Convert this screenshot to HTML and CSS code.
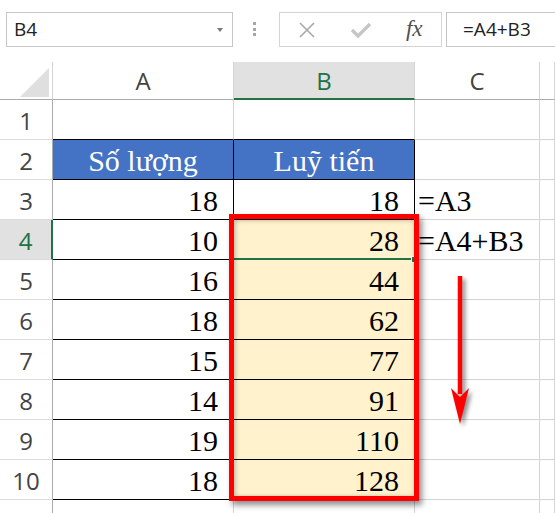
FILE: index.html
```html
<!DOCTYPE html>
<html>
<head>
<meta charset="utf-8">
<title>Luỹ tiến</title>
<link rel="stylesheet" href="styles.css">
</head>
<body>

<!-- FORMULA BAR -->
<div class="toolbar">
  <div class="namebox"><span>B4</span><i class="caret"></i></div>
  <div class="grip"><i></i><i></i><i></i></div>
  <div class="fxbtns">
    <span>
      <svg width="18" height="16" viewBox="0 0 18 16"><path d="M2 1 L16 15 M16 1 L2 15" stroke="#a8a8a8" stroke-width="1.6" fill="none"/></svg>
    </span>
    <span>
      <svg width="22" height="16" viewBox="0 0 22 16"><path d="M2 8 L8 14 L20 2" stroke="#c6c6c6" stroke-width="3.4" fill="none"/></svg>
    </span>
    <span class="fx">fx</span>
  </div>
  <div class="formula">=A4+B3</div>
</div>

<!-- SHEET -->
<div class="sheet">
  <div class="c ch corner"></div>
  <div class="c ch">A</div>
  <div class="c ch on">B</div>
  <div class="c ch">C</div>
  <div class="c ch"></div>

  <div class="c rh">1</div>
  <div class="c top"></div>
  <div class="c top"></div>
  <div class="c"></div>
  <div class="c"></div>

  <div class="c rh">2</div>
  <div class="c t hd">Số lượng</div>
  <div class="c t hd">Luỹ tiến</div>
  <div class="c"></div>
  <div class="c"></div>

  <div class="c rh">3</div>
  <div class="c t num">18</div>
  <div class="c t num">18</div>
  <div class="c f">=A3</div>
  <div class="c"></div>

  <div class="c rh on">4</div>
  <div class="c t num">10</div>
  <div class="c t num y sel">28</div>
  <div class="c f">=A4+B3</div>
  <div class="c"></div>

  <div class="c rh">5</div>
  <div class="c t num">16</div>
  <div class="c t num y">44</div>
  <div class="c"></div>
  <div class="c"></div>

  <div class="c rh">6</div>
  <div class="c t num">18</div>
  <div class="c t num y">62</div>
  <div class="c"></div>
  <div class="c"></div>

  <div class="c rh">7</div>
  <div class="c t num">15</div>
  <div class="c t num y">77</div>
  <div class="c"></div>
  <div class="c"></div>

  <div class="c rh">8</div>
  <div class="c t num">14</div>
  <div class="c t num y">91</div>
  <div class="c"></div>
  <div class="c"></div>

  <div class="c rh">9</div>
  <div class="c t num">19</div>
  <div class="c t num y">110</div>
  <div class="c"></div>
  <div class="c"></div>

  <div class="c rh">10</div>
  <div class="c t num">18</div>
  <div class="c t num y">128</div>
  <div class="c"></div>
  <div class="c"></div>

  <div class="c rh last"></div>
  <div class="c last"></div>
  <div class="c last"></div>
  <div class="c last"></div>
  <div class="c last"></div>

  <!-- annotations -->
  <div class="mark"></div>
  <svg class="arrow" width="40" height="165" viewBox="0 0 40 165">
    <path d="M20 6 L20 124" stroke="#ff0000" stroke-width="4.5" fill="none"/>
    <polygon points="20,154 11,118 20,127 29,118" fill="#ff0000"/>
  </svg>
</div>

</body>
</html>
```

FILE: styles.css
```css
body{
  margin:0;
  background:#fff;
  overflow:hidden;
  font-family:"Open Sans",sans-serif;
}

/* FORMULA BAR */
.toolbar{
  display:flex;
  align-items:flex-start;
  height:62px;
  padding:12px 0 0 6px;
  box-sizing:border-box;
}
.namebox{
  width:227px;
  height:35px;
  box-sizing:border-box;
  border:1px solid #c6c6c6;
  display:flex;
  align-items:center;
  padding-left:7px;
  font-size:19px;
  line-height:33px;
  color:#222;
}
.caret{
  margin-left:auto;
  margin-right:9px;
  border-top:4px solid #7a7a7a;
  border-left:3.5px solid transparent;
  border-right:3.5px solid transparent;
}
.grip{
  width:46px;
  box-sizing:border-box;
  padding:10px 3px 0 0;
  display:flex;
  flex-direction:column;
  align-items:center;
  gap:2.5px;
}
.grip i{width:3px;height:3px;background:#a6a6a6;}

.fxbtns{
  width:163px;
  height:35px;
  box-sizing:border-box;
  border:1px solid #d4d4d4;
  display:flex;
}
.fxbtns span{
  width:54px;
  display:flex;
  align-items:center;
  justify-content:center;
}
.fx{
  font-family:"Liberation Serif",serif;
  font-style:italic;
  font-size:23px;
  color:#4f4f4f;
  padding-bottom:2px;
}
.formula{
  flex:1;
  height:35px;
  margin:0 -20px 0 4px;
  box-sizing:border-box;
  border:1px solid #c6c6c6;
  padding-left:16px;
  font-size:19px;
  line-height:33px;
  color:#222;
}

/* SHEET */
.sheet{
  position:relative;
  display:grid;
  grid-template-columns:53px 181px 181px 125px 1fr;
  grid-template-rows:38px repeat(10,40px) 13px;
}
.c{
  box-sizing:border-box;
  border-right:1px solid #d4d4d4;
  border-bottom:1px solid #d4d4d4;
  font-family:"Liberation Serif",serif;
  font-size:30px;
  line-height:42px;
  white-space:nowrap;
  color:#000;
}
.last{border-bottom:none;}

.ch{
  font-family:"Open Sans",sans-serif;
  font-size:24px;
  line-height:37px;
  text-align:center;
  color:#444;
  border-bottom-color:#ababab;
}
.ch.on{
  background:#e1e1e1;
  color:#217346;
  border-bottom:2px solid #217346;
}
.corner{position:relative;}
.corner::after{
  content:"";
  position:absolute;
  right:3px;
  bottom:2px;
  width:29px;
  height:29px;
  background:#dfdfdf;
  clip-path:polygon(100% 0,100% 100%,0 100%);
}

.rh{
  font-family:"Open Sans",sans-serif;
  font-size:24px;
  line-height:42px;
  text-align:center;
  color:#444;
  border-right-color:#ababab;
  border-bottom-color:#dcdcdc;
}
.rh.on{
  background:#e1e1e1;
  color:#217346;
  border-right:2px solid #217346;
}

.top{border-bottom-color:#000;}
.t{border-right-color:#000;border-bottom-color:#000;}
.hd{background:#4472c4;color:#fff;text-align:center;}
.num{text-align:right;padding-right:15px;}
.y{background:#fff2cc;}
.f{padding-left:3px;}

/* selected cell */
.sel{position:relative;}
.sel::after{
  content:"";
  position:absolute;
  left:-1px;
  right:-1px;
  bottom:-1px;
  height:2px;
  background:#217346;
}
.sel::before{
  content:"";
  position:absolute;
  right:-4px;
  bottom:-4px;
  width:5px;
  height:5px;
  background:#217346;
  border:1px solid #fff;
  z-index:1;
}

/* RED HIGHLIGHT + ARROW */
.mark{
  position:absolute;
  left:229px;
  top:152px;
  width:190px;
  height:287px;
  box-sizing:border-box;
  border:5px solid #ff0000;
  box-shadow:3px 4px 6px rgba(0,0,0,.45), inset 1px 1px 5px rgba(0,0,0,.3);
  z-index:2;
}
.arrow{
  position:absolute;
  left:440px;
  top:208px;
  filter:drop-shadow(3px 3px 2px rgba(0,0,0,.45));
}
```
